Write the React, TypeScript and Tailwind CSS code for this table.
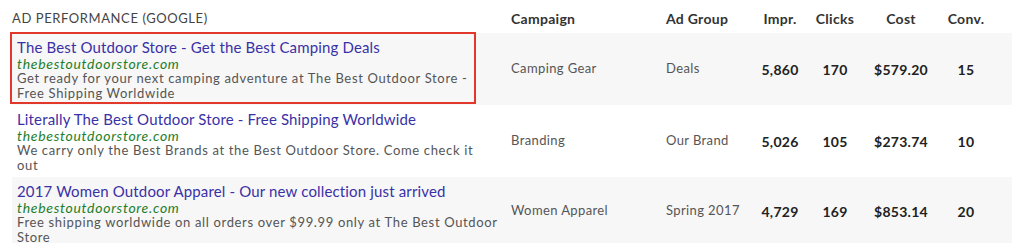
import React from 'react'

type Ad = {
  title: string
  url: string
  lines: string[]
  campaign: string
  group: string
  impr: string
  clicks: string
  cost: string
  conv: string
}

const ads: Ad[] = [
  {
    title: 'The Best Outdoor Store - Get the Best Camping Deals',
    url: 'thebestoutdoorstore.com',
    lines: ['Get ready for your next camping adventure at The Best Outdoor Store -', 'Free Shipping Worldwide'],
    campaign: 'Camping Gear',
    group: 'Deals',
    impr: '5,860',
    clicks: '170',
    cost: '$579.20',
    conv: '15',
  },
  {
    title: 'Literally The Best Outdoor Store - Free Shipping Worldwide',
    url: 'thebestoutdoorstore.com',
    lines: ['We carry only the Best Brands at the Best Outdoor Store. Come check it', 'out'],
    campaign: 'Branding',
    group: 'Our Brand',
    impr: '5,026',
    clicks: '105',
    cost: '$273.74',
    conv: '10',
  },
  {
    title: '2017 Women Outdoor Apparel - Our new collection just arrived',
    url: 'thebestoutdoorstore.com',
    lines: ['Free shipping worldwide on all orders over $99.99 only at The Best Outdoor', 'Store'],
    campaign: 'Women Apparel',
    group: 'Spring 2017',
    impr: '4,729',
    clicks: '169',
    cost: '$853.14',
    conv: '20',
  },
]

const cols = 'grid grid-cols-[488px_155px_96px_58px_52px_80px_50px_22px]'
const rowHeights = ['h-[72px]', 'h-[72px]', 'h-[66px]']

export default function App() {
  return (
    <div className="w-[1024px] h-[250px] bg-white overflow-hidden px-3 font-['Lato','Liberation_Sans',sans-serif]">
      {/* header */}
      <div className={`${cols} h-[33px] items-center text-[14px] tracking-[0.02em] text-[#333]`}>
        <div className="text-[13px] tracking-[0.045em] text-[#444] pt-1">AD PERFORMANCE (GOOGLE)</div>
        <div className="pl-[11px] font-bold pt-1">Campaign</div>
        <div className="pl-[11px] font-bold pt-1">Ad Group</div>
        <div className="text-center font-bold pt-1">Impr.</div>
        <div className="text-center font-bold pt-1">Clicks</div>
        <div className="text-center font-bold pt-1">Cost</div>
        <div className="text-center font-bold pt-1">Conv.</div>
        <div />
      </div>

      {ads.map((ad, i) => (
        <div
          key={ad.title}
          className={`${cols} ${rowHeights[i]} items-center relative ${i % 2 === 0 ? 'bg-[#f7f7f7]' : 'bg-white'}`}
        >
          <div className="self-start pt-[6px] pl-[5px] whitespace-nowrap">
            <div className="text-[15px] leading-[16px] text-[#3a31a6] tracking-[0.01em]">{ad.title}</div>
            <div className="text-[14px] leading-[15px] italic text-[#1e7e2c] tracking-[0.05em] mt-[1px]">{ad.url}</div>
            {ad.lines.map((l) => (
              <div key={l} className="text-[13px] leading-[15px] text-[#555] tracking-[0.05em]">
                {l}
              </div>
            ))}
          </div>
          <div className="pl-[11px] text-[13px] tracking-[0.03em] text-[#555]">{ad.campaign}</div>
          <div className="pl-[11px] text-[13px] tracking-[0.03em] text-[#555]">{ad.group}</div>
          <div className="text-center text-[14px] tracking-[0.02em] font-bold text-[#222]">{ad.impr}</div>
          <div className="text-center text-[14px] tracking-[0.02em] font-bold text-[#222]">{ad.clicks}</div>
          <div className="text-center text-[14px] tracking-[0.02em] font-bold text-[#222]">{ad.cost}</div>
          <div className="text-center text-[14px] tracking-[0.02em] font-bold text-[#222]">{ad.conv}</div>
          <div />
          {i === 0 && (
            <div className="absolute left-[-2px] top-[-1px] w-[466px] h-[72px] border-2 border-[#e2382c] pointer-events-none" />
          )}
        </div>
      ))}
    </div>
  )
}
